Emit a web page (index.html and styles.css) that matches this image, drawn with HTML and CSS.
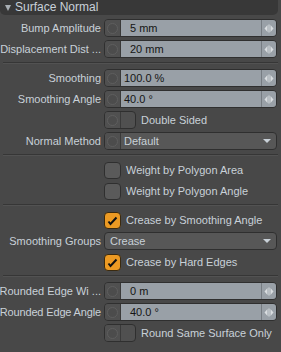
FILE: index.html
```html
<!DOCTYPE html>
<html>
<head>
<title>Surface Normal</title>
<link rel="stylesheet" href="styles.css">
</head>
<body>

<div class="panel">
  <div class="header"><span class="caret-down"></span>Surface Normal</div>

  <div class="rows">
    <div class="row">
      <div class="label"><span>Bump Amplitude</span></div>
      <div class="field">
        <span class="knob"></span>
        <span class="value pad">5 mm</span>
        <span class="spin"><svg width="10" height="9" viewBox="0 0 10 9"><path d="M3.5 1 L0.5 4.5 L3.5 8 Z M6.5 1 L9.5 4.5 L6.5 8 Z" fill="#dadee1"/><rect x="4.5" y="0.5" width="1" height="8" fill="#dadee1"/></svg></span>
      </div>
    </div>
    <div class="row">
      <div class="label"><span>Displacement Dist ...</span></div>
      <div class="field">
        <span class="knob"></span>
        <span class="value pad">20 mm</span>
        <span class="spin"><svg width="10" height="9" viewBox="0 0 10 9"><path d="M3.5 1 L0.5 4.5 L3.5 8 Z M6.5 1 L9.5 4.5 L6.5 8 Z" fill="#dadee1"/><rect x="4.5" y="0.5" width="1" height="8" fill="#dadee1"/></svg></span>
      </div>
    </div>

    <div class="sep"></div>

    <div class="row">
      <div class="label"><span>Smoothing</span></div>
      <div class="field">
        <span class="knob"></span>
        <span class="value">100.0 %</span>
        <span class="spin"><svg width="10" height="9" viewBox="0 0 10 9"><path d="M3.5 1 L0.5 4.5 L3.5 8 Z M6.5 1 L9.5 4.5 L6.5 8 Z" fill="#dadee1"/><rect x="4.5" y="0.5" width="1" height="8" fill="#dadee1"/></svg></span>
      </div>
    </div>
    <div class="row">
      <div class="label"><span>Smoothing Angle</span></div>
      <div class="field">
        <span class="knob"></span>
        <span class="value">40.0 °</span>
        <span class="spin"><svg width="10" height="9" viewBox="0 0 10 9"><path d="M3.5 1 L0.5 4.5 L3.5 8 Z M6.5 1 L9.5 4.5 L6.5 8 Z" fill="#dadee1"/><rect x="4.5" y="0.5" width="1" height="8" fill="#dadee1"/></svg></span>
      </div>
    </div>
    <div class="row">
      <div class="label"></div>
      <div class="check-row">
        <span class="toggle"><span class="knob"></span></span>
        <span class="check-label">Double Sided</span>
      </div>
    </div>
    <div class="row">
      <div class="label"><span>Normal Method</span></div>
      <div class="select">
        <span class="knob"></span>
        <span class="select-text">Default</span>
        <span class="tri"></span>
      </div>
    </div>

    <div class="sep"></div>

    <div class="row">
      <div class="label"></div>
      <div class="check-row">
        <span class="box"></span>
        <span class="check-label">Weight by Polygon Area</span>
      </div>
    </div>
    <div class="row">
      <div class="label"></div>
      <div class="check-row">
        <span class="box"></span>
        <span class="check-label">Weight by Polygon Angle</span>
      </div>
    </div>

    <div class="sep"></div>

    <div class="row">
      <div class="label"></div>
      <div class="check-row">
        <span class="box on"><svg width="13" height="13" viewBox="0 0 13 13"><path d="M2.5 7.5 L4.5 10 L10.5 3.5" fill="none" stroke="#111" stroke-width="2"/></svg></span>
        <span class="check-label">Crease by Smoothing Angle</span>
      </div>
    </div>
    <div class="row">
      <div class="label"><span>Smoothing Groups</span></div>
      <div class="select">
        <span class="select-text plain">Crease</span>
        <span class="tri"></span>
      </div>
    </div>
    <div class="row">
      <div class="label"></div>
      <div class="check-row">
        <span class="box on"><svg width="13" height="13" viewBox="0 0 13 13"><path d="M2.5 7.5 L4.5 10 L10.5 3.5" fill="none" stroke="#111" stroke-width="2"/></svg></span>
        <span class="check-label">Crease by Hard Edges</span>
      </div>
    </div>

    <div class="sep"></div>

    <div class="row">
      <div class="label"><span>Rounded Edge Wi ...</span></div>
      <div class="field">
        <span class="knob"></span>
        <span class="value pad">0 m</span>
        <span class="spin"><svg width="10" height="9" viewBox="0 0 10 9"><path d="M3.5 1 L0.5 4.5 L3.5 8 Z M6.5 1 L9.5 4.5 L6.5 8 Z" fill="#dadee1"/><rect x="4.5" y="0.5" width="1" height="8" fill="#dadee1"/></svg></span>
      </div>
    </div>
    <div class="row">
      <div class="label"><span class="tight">Rounded Edge Angle</span></div>
      <div class="field">
        <span class="knob"></span>
        <span class="value pad">40.0 °</span>
        <span class="spin"><svg width="10" height="9" viewBox="0 0 10 9"><path d="M3.5 1 L0.5 4.5 L3.5 8 Z M6.5 1 L9.5 4.5 L6.5 8 Z" fill="#dadee1"/><rect x="4.5" y="0.5" width="1" height="8" fill="#dadee1"/></svg></span>
      </div>
    </div>
    <div class="row">
      <div class="label"></div>
      <div class="check-row">
        <span class="toggle"><span class="knob"></span></span>
        <span class="check-label">Round Same Surface Only</span>
      </div>
    </div>
  </div>
</div>

</body>
</html>
```

FILE: styles.css
```css
body {
    margin: 0;
    padding: 0;
    background-color: #484848;
    font-family: "Liberation Sans", Arial, sans-serif;
    font-size: 11px;
    color: #c9d1d8;
}

.panel {
    width: 281px;
    height: 352px;
    background-color: #484848;
}

.header {
    height: 15px;
    line-height: 15px;
    margin-right: 3px;
    background-color: #383838;
    border-radius: 0 0 5px 5px;
    color: #c9d1d8;
    font-size: 12px;
    padding-left: 5px;
    display: flex;
    align-items: center;
}

.caret-down {
    width: 0;
    height: 0;
    border-left: 3px solid transparent;
    border-right: 3px solid transparent;
    border-top: 6px solid #a8aeb3;
    margin-right: 4px;
}

.rows {
    display: flex;
    flex-direction: column;
    gap: 3px;
    padding-top: 4px;
}

.row {
    display: flex;
    height: 18px;
    align-items: center;
}

.label {
    width: 101px;
    flex: none;
    display: flex;
    justify-content: flex-end;
    white-space: nowrap;
    margin-right: 3px;
}

.tight {
    letter-spacing: -0.15px;
}

.sep {
    height: 0;
    margin: 1px 3px 2px 3px;
    border-top: 1px solid #363636;
    border-bottom: 1px solid #525252;
}

/* numeric field */
.field {
    display: flex;
    width: 173px;
    height: 18px;
    box-sizing: border-box;
    border: 1px solid #2f2f2f;
    border-radius: 4px;
    overflow: hidden;
}

.knob {
    width: 15px;
    flex: none;
    background-color: #505050;
    display: flex;
    align-items: center;
    justify-content: center;
    border-right: 1px solid #3a3a3a;
}

.knob::before {
    content: "";
    width: 9px;
    height: 9px;
    border-radius: 50%;
    border: 1px solid #5f5f5f;
    background-color: #4c4c4c;
}

.value {
    flex: 1;
    background-color: #99a0a7;
    color: #151515;
    line-height: 16px;
    padding-left: 3px;
}

.value.pad {
    padding-left: 9px;
}

.spin {
    width: 14px;
    flex: none;
    background-color: #99a0a7;
    border-left: 1px solid #767c82;
    display: flex;
    align-items: center;
    justify-content: center;
}

/* toggles and checkboxes */
.check-row {
    display: flex;
    align-items: center;
}

.toggle {
    display: flex;
    width: 32px;
    height: 18px;
    box-sizing: border-box;
    border: 1px solid #2f2f2f;
    border-radius: 4px;
    overflow: hidden;
    background-color: #505050;
}

.box {
    width: 17px;
    height: 17px;
    box-sizing: border-box;
    border: 1px solid #2f2f2f;
    border-radius: 4px;
    background-color: #5a5a5a;
    display: flex;
    align-items: center;
    justify-content: center;
}

.box.on {
    background-color: #ec9a23;
    border-color: #3a2a10;
}

.check-label {
    margin-left: 5px;
    white-space: nowrap;
}

.toggle + .check-label {
    margin-left: 5px;
}

/* dropdown */
.select {
    display: flex;
    align-items: center;
    width: 173px;
    height: 18px;
    box-sizing: border-box;
    border: 1px solid #2f2f2f;
    border-radius: 4px;
    overflow: hidden;
    background-color: #575757;
}

.select .knob {
    height: 100%;
}

.select-text {
    flex: 1;
    padding-left: 3px;
}

.select-text.plain {
    padding-left: 5px;
}

.tri {
    width: 0;
    height: 0;
    border-left: 4px solid transparent;
    border-right: 4px solid transparent;
    border-top: 4px solid #c9d1d8;
    margin-right: 5px;
}
```
